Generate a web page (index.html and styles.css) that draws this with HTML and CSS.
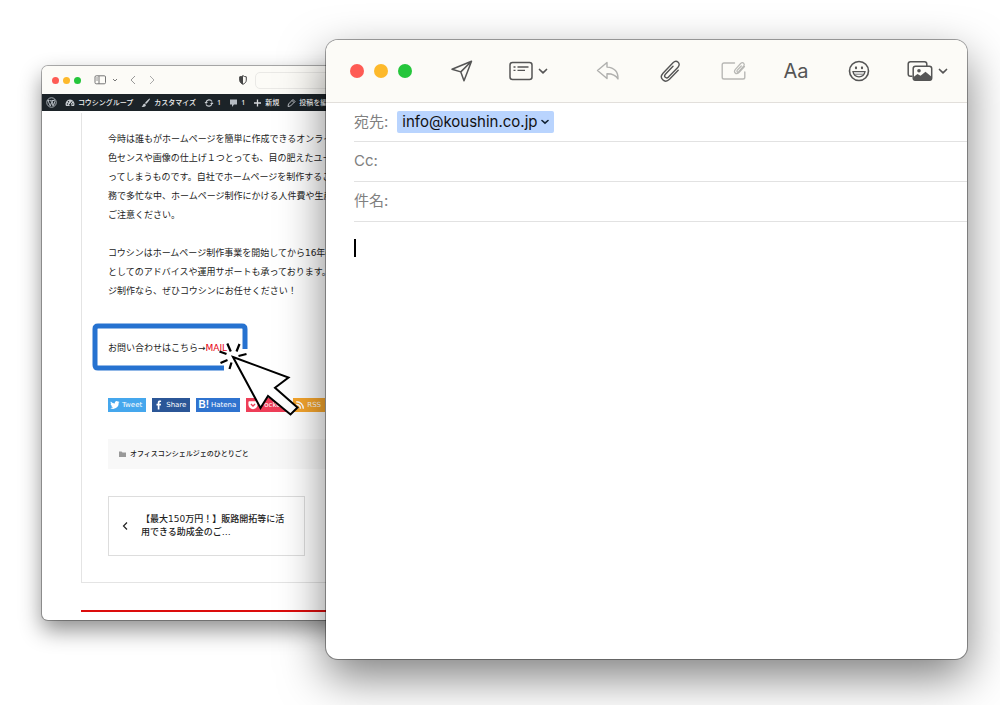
FILE: index.html
```html
<!DOCTYPE html>
<html lang="ja">
<head>
<meta charset="utf-8">
<meta name="viewport" content="width=device-width, initial-scale=1">
<title>お問い合わせメール</title>
<link rel="stylesheet" href="styles.css">
</head>
<body>
<main class="desktop">
  <section class="window browser" aria-label="ブラウザ">
    <header class="browser-bar">
      <div class="lights lights-small"><i class="red"></i><i class="yellow"></i><i class="green"></i></div>
      <button class="icon-button sidebar-button" aria-label="サイドバー">
        <svg width="24" height="12" viewBox="0 0 24 12" fill="none" stroke="#777"><rect x="1" y="1.800" width="10.500" height="8" rx="1.200"/><path d="M5 2v8M2.300 4h1.500M2.300 6h1.500"/><path d="M19 5l2 2 2-2"/></svg>
      </button>
      <button class="icon-button" aria-label="戻る"><svg width="8" height="12" viewBox="0 0 8 12" fill="none" stroke="#999"><path d="M6 2L2 6l4 4"/></svg></button>
      <button class="icon-button" aria-label="進む"><svg width="8" height="12" viewBox="0 0 8 12" fill="none" stroke="#aaa"><path d="M2 2l4 4-4 4"/></svg></button>
      <button class="icon-button shield-button" aria-label="プライバシー"><svg width="8" height="10" viewBox="0 0 8 10"><path d="M4 .7C3 1.500 2 1.700.7 1.800v3.400C.7 7.200 2.300 8.500 4 9.300c1.700-.8 3.300-2.100 3.300-4.100V1.800C6 1.700 5 1.500 4 .7z" fill="none" stroke="#444"/><path d="M4 .7v8.600C2.300 8.500.7 7.200.7 5.200V1.800C2 1.700 3 1.500 4 .7z" fill="#444"/></svg></button>
      <input class="address" type="text" aria-label="アドレス">
    </header>

    <nav class="admin-bar" aria-label="管理バー">
      <svg width="11" height="11" viewBox="0 0 22 22"><circle cx="11" cy="11" r="9.500" fill="none" stroke="#b5bbc2" stroke-width="1.800"/><path d="M4 7l4.500 11L11 11 9.500 7H8M11 7h5M12 7l3 10 2.500-7c.7-2-.8-3-1-5M3 7h4M11 11l3 7" fill="none" stroke="#b5bbc2" stroke-width="2"/></svg>
      <span class="admin-item"><svg width="10" height="10" viewBox="0 0 20 20"><path d="M10 3a9 9 0 0 0-8 13h16A9 9 0 0 0 10 3z" fill="#c6cbd0"/><path d="M9 14l5-7" stroke="#1c2328" stroke-width="2"/><g fill="#1c2328"><circle cx="5" cy="12" r="1.300"/><circle cx="7" cy="7.500" r="1.300"/><circle cx="15.500" cy="12" r="1.300"/><circle cx="11" cy="14" r="2.200"/></g></svg>コウシングループ</span>
      <span class="admin-item"><svg width="10" height="10" viewBox="0 0 20 20"><path d="M18 1c1 1-5 9-8 11l-2-2c2-3 9-10 10-9zM7 11l3 3c-1 4-5 4-9 4 3-1 2-6 6-7z" fill="#c6cbd0"/></svg>カスタマイズ</span>
      <span class="admin-item"><svg width="10" height="10" viewBox="0 0 20 20" fill="none" stroke="#c6cbd0" stroke-width="2.400"><path d="M4 9a6.500 6.500 0 0 1 12-2M16 11a6.500 6.500 0 0 1-12 2"/><path d="M1 8l3 4 4-4zM19 12l-3-4-4 4z" fill="#c6cbd0" stroke="none"/></svg>1</span>
      <span class="admin-item"><svg width="9" height="10" viewBox="0 0 18 20"><path d="M2 3h14v10h-6l-4 5v-5H2z" fill="#b5bbc2"/></svg>1</span>
      <span class="admin-item"><svg width="9" height="10" viewBox="0 0 18 20"><path d="M9 3v14M2 10h14" stroke="#d5d8dc" stroke-width="2.600"/></svg>新規</span>
      <span class="admin-item"><svg width="9" height="10" viewBox="0 0 18 20" fill="none" stroke="#c6cbd0" stroke-width="1.800"><path d="M2 17l1-5 9-9 4 4-9 9zM10 5l4 4"/></svg>投稿を編集</span>
    </nav>

    <div class="page">
      <article class="post">
        <p>今時は誰もがホームページを簡単に作成できるオンライン<br>色センスや画像の仕上げ１つとっても、目の肥えたユーザ<br>ってしまうものです。自社でホームページを制作すること<br>務で多忙な中、ホームページ制作にかける人件費や生産性<br>ご注意ください。</p>
        <p>コウシンはホームページ制作事業を開始してから16年の<br>としてのアドバイスや運用サポートも承っております。エ<br>ジ制作なら、ぜひコウシンにお任せください！</p>
        <p class="contact">お問い合わせはこちら→<a class="mail-link" href="#mail">MAIL</a>
          <svg class="pointer" width="220" height="100" viewBox="88 320 220 100" fill="none">
            <path d="M245 349V329q0-3-3-3H98q-3 0-3 3v36q0 3 3 3h126" stroke="#2672d0" stroke-width="5"/>
            <path d="M233 357l55.500 20.500L275 387.700l22.500 19.800-7 7L268 396l-7.500 12z" fill="#fff" stroke="#000" stroke-width="2"/>
            <path d="M227.300 343.500l3.500 8M239.500 344l-3 7.500M246.500 354l-8 2M219.500 351.500l7 2.500M220.500 363l7-3M229.500 369l2-6.500" stroke="#000" stroke-width="2.200"/>
          </svg>
        </p>
        <div class="shares">
          <a class="share tweet" href="#tweet"><svg width="10" height="10" viewBox="0 0 24 24"><path d="M23 5c-1 .4-1.700.6-2.600.7 1-.6 1.600-1.400 2-2.500-.9.500-1.900.9-2.900 1.100a4.600 4.600 0 0 0-7.900 4.200C7.800 8.300 4.400 6.500 2 3.600c-1.200 2.200-.6 4.800 1.500 6.200-.8 0-1.500-.2-2.100-.6 0 2.200 1.600 4.100 3.700 4.600-.7.200-1.400.2-2.100.1.600 1.800 2.300 3.100 4.300 3.200A9.300 9.300 0 0 1 .5 19 13 13 0 0 0 20.700 7.300c1-.6 1.700-1.400 2.300-2.300z" fill="#fff"/></svg>Tweet</a>
          <a class="share facebook" href="#share"><svg width="10" height="10" viewBox="0 0 24 24"><path d="M9 23V13H6V9h3V6c0-3.500 2-5 5-5h3v4h-2c-1.500 0-2 .6-2 2v2h4l-.6 4H13v10z" fill="#fff"/></svg>Share</a>
          <a class="share hatena" href="#hatena"><b>B!</b>Hatena</a>
          <a class="share pocket" href="#pocket"><svg width="10" height="10" viewBox="0 0 24 24"><path d="M3 3h18c1 0 2 1 2 2v6a11 11 0 0 1-22 0V5c0-1 1-2 2-2z" fill="#fff"/><path d="M7 9.500l5 5 5-5" fill="none" stroke="#ee3e58" stroke-width="3"/></svg>Pocket</a>
          <a class="share rss" href="#rss"><svg width="10" height="10" viewBox="0 0 24 24" fill="none" stroke="#fff" stroke-width="3.500"><path d="M3 4c10 0 17 7 17 17M3 11c6 0 10 4 10 10"/><circle cx="5" cy="19" r="1"/></svg>RSS</a>
        </div>
        <div class="category"><svg width="7" height="6" viewBox="0 0 14 12"><path d="M0 1h5l2 2h7v9H0z" fill="#999"/></svg>オフィスコンシェルジェのひとりごと</div>
        <a class="previous" href="#previous">
          <svg width="6" height="10" viewBox="0 0 6 10" fill="none" stroke="#222" stroke-width="1.200"><path d="M5 1.500L1.500 5 5 8.500"/></svg>
          <span>【最大150万円！】販路開拓等に活<br>用できる助成金のご…</span>
        </a>
      </article>
    </div>
  </section>

  <section class="window mail" id="mail" aria-label="新規メッセージ">
    <header class="mail-bar">
      <div class="lights"><i class="red"></i><i class="yellow"></i><i class="green"></i></div>
      <div class="tools">
        <button class="tool" aria-label="送信"><svg width="22" height="22" viewBox="0 0 22 22" fill="none" stroke="#555" stroke-width="1.500" stroke-linejoin="round"><path d="M20.500 1.200L1 9.200l8.800 2.700L13 20.800zM20.500 1.200L9.800 11.900"/></svg></button>
        <button class="tool tool-list" aria-label="ヘッダー"><svg width="24" height="20" viewBox="0 0 24 20" fill="none" stroke="#555" stroke-width="1.500"><rect x="1" y="1.500" width="22" height="17" rx="2.500"/><path d="M4.500 6h2M8.500 6h11M4.500 9.300h2M8.500 9.300h7.500" stroke-width="1.300"/></svg><svg width="10" height="8" viewBox="0 0 10 8" fill="none" stroke="#555" stroke-width="1.700" stroke-linecap="round" stroke-linejoin="round"><path d="M1.500 2.500L5 5.800l3.500-3.300"/></svg></button>
        <button class="tool" aria-label="返信"><svg width="24" height="22" viewBox="0 0 24 22" fill="none" stroke="#b0b0ae" stroke-width="1.400" stroke-linejoin="round"><path d="M11 2.500L1.500 10.500l9.500 8v-4.700c5-.1 8.500 1 11 5.200.3-7-3.500-11.600-11-11.900z"/></svg></button>
        <button class="tool tool-wide" aria-label="添付"><svg width="22" height="24" viewBox="0 0 22 24" fill="none" stroke="#555" stroke-width="1.400" stroke-linecap="round"><path d="M19.200 11.200l-8.700 9.100c-4.800 4.600-11-1.100-6.500-6.100L14 3.700c3.700-3.400 8.400.8 5 4.500l-9.500 9.900c-2.400 2.100-5.200-.5-3.100-2.900l7.600-7.900"/></svg></button>
        <button class="tool tool-wide" aria-label="添付を含める"><svg width="25" height="22" viewBox="0 0 25 22" fill="none" stroke="#b8b8b5" stroke-width="1.400" stroke-linecap="round"><path d="M13.500 3H3q-1.800 0-1.800 1.800v12.400Q1.200 19 3 19h19q1.800 0 1.800-1.800V12"/><path d="M23.500 6.500l-5.500 6c-3 2.700-6-.4-3.600-3.200l5.200-5.800c2.400-2 4.800.5 3 2.700l-5 5.400c-1.200 1-2.300-.2-1.300-1.400l4-4.200" stroke-width="1.200"/></svg></button>
        <button class="tool tool-wide tool-text" aria-label="フォーマット">Aa</button>
        <button class="tool tool-wide" aria-label="絵文字"><svg width="22" height="22" viewBox="0 0 22 22"><circle cx="11" cy="11" r="9.500" fill="none" stroke="#555" stroke-width="1.600"/><g fill="#555"><ellipse cx="8" cy="7.800" rx="1.100" ry="1.500"/><ellipse cx="14" cy="7.800" rx="1.100" ry="1.500"/></g><path d="M5 11.700h12c-.6 3.200-2.900 5.100-6 5.100s-5.400-1.900-6-5.100z" fill="#fff" stroke="#555" stroke-width="1.300"/><path d="M6 14.200h10" stroke="#555" stroke-width=".8"/></svg></button>
        <button class="tool tool-photo" aria-label="写真"><svg width="26" height="22" viewBox="0 0 26 22"><path d="M5.500 16.200H3.500q-2.300 0-2.300-2.300V4q0-2.300 2.300-2.300h14q2.300 0 2.300 2.300v2" fill="none" stroke="#555" stroke-width="1.500"/><rect x="6.200" y="6.200" width="18.500" height="14" rx="2.300" fill="#fcfbf7" stroke="#555" stroke-width="1.500"/><circle cx="12" cy="10.700" r="1.800" fill="#555"/><path d="M6.500 17l4-3 3 1.800 5-4 6 5v2.500q0 1.200-1.500 1.200h-15q-1.500 0-1.500-1.500z" fill="#555"/></svg><svg width="10" height="8" viewBox="0 0 10 8" fill="none" stroke="#555" stroke-width="1.700" stroke-linecap="round" stroke-linejoin="round"><path d="M1.500 2.500L5 5.800l3.500-3.300"/></svg></button>
      </div>
    </header>
    <form class="compose">
      <div class="field"><label for="to">宛先:</label><button class="recipient" id="to" type="button">info@koushin.co.jp<svg width="8" height="6" viewBox="0 0 8 6" fill="none" stroke="#123" stroke-width="1.600" stroke-linecap="round"><path d="M1 1.500L4 4.200l3-2.700"/></svg></button></div>
      <div class="field"><label for="cc">Cc:</label><input id="cc" type="text"></div>
      <div class="field"><label for="subject">件名:</label><input id="subject" type="text"></div>
      <div class="message" role="textbox" aria-label="本文"><span class="caret"></span></div>
    </form>
  </section>
</main>
</body>
</html>
```
FILE: styles.css
```css
* { box-sizing: border-box; }
body { margin: 0; background: #fff; font-family: "Noto Sans", "Noto Sans CJK JP", sans-serif; }
button, input { font: inherit; border: 0; padding: 0; background: none; color: inherit; }
input { outline: 0; }
a { color: inherit; text-decoration: none; }
svg { display: block; flex: none; }

.desktop { position: relative; min-height: 100vh; overflow: hidden; }
.window { position: absolute; background: #fff; display: flex; flex-direction: column; }
.browser {
  top: 66px; left: 42px; right: 400px; bottom: 85px;
  border-radius: 6px;
  box-shadow: 0 0 0 1px rgba(0, 0, 0, .3), 0 10px 22px rgba(0, 0, 0, .45);
}
.mail {
  top: 40px; left: 326px; right: 33px; bottom: 46px;
  border-radius: 12px;
  box-shadow: 0 0 0 1px rgba(0, 0, 0, .35), 0 18px 46px rgba(0, 0, 0, .5);
}

.lights { display: flex; gap: 10px; }
.lights i { width: 14px; height: 14px; border-radius: 50%; }
.lights-small { gap: 4px; }
.lights-small i { width: 7px; height: 7px; }
.red { background: #fe5b54; }
.yellow { background: #fdb92b; }
.green { background: #25c63b; }

.browser-bar { display: flex; align-items: center; height: 28px; padding-left: 10px; background: #fcfbf7; border-radius: 6px 6px 0 0; }
.icon-button { margin-right: 11px; }
.sidebar-button { margin-left: 13px; }
.shield-button { margin: 0 8px 0 72px; }
.address { flex: 1; height: 17px; border: 1px solid #eae9e6; border-radius: 5px; }
.admin-bar { display: flex; align-items: center; gap: 8px; height: 17px; padding-left: 4px; overflow: hidden; background: #1c2328; color: #eee; font-size: 7px; font-weight: 500; line-height: 17px; white-space: nowrap; }
.admin-item { display: flex; align-items: center; gap: 3px; flex: none; }

.page { margin: 2px 0 0 39px; overflow: hidden; border-bottom: 2px solid #dc0d0d; padding-bottom: 27px; }
.post { border: 1px solid #e4e4e4; border-right: 0; border-top: 0; padding: 17px 0 26px 26px; color: #222; font-family: "DejaVu Sans", "Noto Sans CJK JP", sans-serif; font-size: 9px; line-height: 19px; white-space: nowrap; }
.post p { margin: 0 0 19px; }
.post .contact { position: relative; margin: 38px 0 40px; }
.mail-link { color: #e60012; }
.pointer { position: absolute; left: -20px; top: -19px; }

.shares { display: flex; gap: 6px; }
.share { display: flex; align-items: center; gap: 2px; height: 14px; padding: 0 4px 0 2px; color: #fff; font-family: "DejaVu Sans", sans-serif; font-size: 7px; line-height: 14px; }
.share b { font-family: "Liberation Sans", sans-serif; font-size: 10px; }
.tweet { background: #45a7ed; }
.facebook { background: #2b5697; }
.hatena { background: #2f73cf; }
.pocket { background: #ee3e58; }
.rss { background: #f8a72e; }
.category { display: flex; align-items: center; gap: 4px; height: 30px; margin-top: 27px; padding-left: 11px; background: #f8f8f8; font-size: 7px; font-weight: 500; }
.previous { display: flex; align-items: center; gap: 13px; width: 197px; height: 60px; margin-top: 27px; padding-left: 13px; border: 1px solid #ddd; font-weight: 500; line-height: 13px; }

.mail-bar { display: flex; align-items: center; height: 63px; padding: 0 19px 0 24px; border-bottom: 1px solid #e2dfdb; border-radius: 12px 12px 0 0; background: #fcfbf7; }
.tools { display: flex; flex: 1; align-items: center; justify-content: space-between; margin-left: 36px; }
.tool { display: flex; align-items: center; justify-content: center; width: 28px; height: 28px; }
.tool-wide { width: 30px; }
.tool-list { width: 52px; gap: 5px; justify-content: flex-start; }
.tool-photo { width: 41px; gap: 5px; }
.tool-text { color: #555; font-family: Inter, sans-serif; font-size: 20px; }

.compose { display: flex; flex: 1; flex-direction: column; padding-left: 28px; font-family: Inter, "Noto Sans CJK JP", sans-serif; font-size: 15px; line-height: 20px; }
.field { display: flex; align-items: center; gap: 9px; height: 40px; padding-bottom: 2px; border-bottom: 1px solid #e2e2e2; }
.field:first-child { height: 39px; padding-bottom: 0; }
.field label { color: #808080; }
.field input { flex: 1; height: 24px; }
.recipient { display: flex; align-items: center; gap: 4px; height: 22px; padding: 0 5px; border-radius: 2px; background: #b9d4fe; color: #111; }
.message { flex: 1; padding-top: 17px; }
.caret { display: block; width: 2px; height: 18px; background: #000; }
```
